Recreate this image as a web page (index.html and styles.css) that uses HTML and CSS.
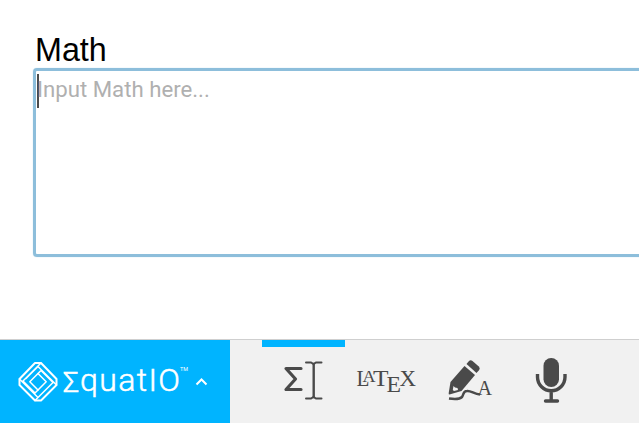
FILE: index.html
```html
<!DOCTYPE html>
<html lang="en">
<head>
<meta charset="utf-8">
<title>EquatIO</title>
<link rel="stylesheet" href="styles.css">
</head>
<body>
<main class="editor">
  <div class="label">Math</div>
  <div class="field"><span class="caret"></span><span class="placeholder">Input Math here...</span></div>
</main>
<footer class="toolbar">
  <div class="brand">
    <svg width="230" height="83" viewBox="0 340 230 83">
      <g fill="none" stroke="#fff" stroke-width="1.500" stroke-linejoin="round" stroke-linecap="round">
        <path d="M35 363H41L56.500 379V385L41 400.500H35L19.500 385V379Z" stroke-width="2"/>
        <path d="M38 373.500L46.200 381.700L38 390L29.800 381.700Z"/>
        <path d="M41 363L23 381L35 393L38 390M56.500 385L38 366.500L26 378.500M35 400.500L53 382.500L41 370.500L38 373.500M19.500 379L38 397.500L50 385.500"/>
      </g>
      <text class="brand-sigma" x="63" y="391.500" textLength="16" lengthAdjust="spacingAndGlyphs">Σ</text>
      <text class="brand-name" x="80" y="391" textLength="100" lengthAdjust="spacing">quatIO</text>
      <text class="brand-tm" x="180" y="371" textLength="8" lengthAdjust="spacingAndGlyphs">TM</text>
      <path d="M196.500 384.500L201.500 379.500L206.500 384.500" fill="none" stroke="#fff" stroke-width="2"/>
    </svg>
  </div>
  <nav class="tools">
    <div class="tool active">
      <svg width="83" height="83" viewBox="262 340 83 83">
        <g fill="none" stroke="#4a4a4a" stroke-linecap="round">
          <path d="M301 368.500H286L295.500 379L286 389.500H301" stroke-width="3.200" stroke-linejoin="round"/>
          <path d="M306 362.500H311L313.500 364L316 362.500H321.500M306 398.500H311L313.500 397L316 398.500H321.500" stroke-width="2"/>
          <path d="M313.700 364V397" stroke-width="2.400"/>
        </g>
      </svg>
    </div>
    <div class="tool">
      <svg width="83" height="83" viewBox="345 340 83 83">
        <g class="latex-text">
          <text x="356.500" y="386" textLength="13" lengthAdjust="spacingAndGlyphs">L</text>
          <text class="latex-a" x="362.500" y="382" textLength="13" lengthAdjust="spacingAndGlyphs">A</text>
          <text x="373" y="386" textLength="15.500" lengthAdjust="spacingAndGlyphs">T</text>
          <text x="386.500" y="391.500" textLength="14.500" lengthAdjust="spacingAndGlyphs">E</text>
          <text x="399.500" y="386" textLength="16.500" lengthAdjust="spacingAndGlyphs">X</text>
        </g>
      </svg>
    </div>
    <div class="tool">
      <svg width="83" height="83" viewBox="428 340 83 83">
        <g fill="#4a4a4a">
          <path d="M464.500 366L475 375L461.500 391L449.500 394.500Q448.500 394.500 448.700 393L450.500 382Z"/>
          <path d="M466.500 364L469 361Q470.500 359.500 472.500 361L478.800 366.500Q480.500 368 479.200 370L476.500 373Z"/>
          <path d="M453.500 386L455 387.500L457.500 388L458 390L454 391L452.800 390Z" fill="#f1f1f1"/>
        </g>
        <path d="M449 398.500C456 399.500 460 399 462 397C464 394 463 391 467 391C471 390.500 474 394 480 394.500" fill="none" stroke="#4a4a4a" stroke-width="2.500"/>
        <text class="ink-a" x="477.500" y="395" textLength="14.500" lengthAdjust="spacingAndGlyphs">A</text>
      </svg>
    </div>
    <div class="tool">
      <svg width="83" height="83" viewBox="511 340 83 83">
        <rect x="543.500" y="358" width="15.500" height="29" rx="7.700" fill="#4a4a4a"/>
        <path d="M537.500 374V377A13.700 13.700 0 0 0 565 377V374M551.200 391V400" fill="none" stroke="#4a4a4a" stroke-width="3.400"/>
        <path d="M545.500 401H557.500" stroke="#4a4a4a" stroke-width="3.400" stroke-linecap="round"/>
      </svg>
    </div>
  </nav>
</footer>
</body>
</html>
```
FILE: styles.css
```css
* { box-sizing: border-box; }
body {
  margin: 0;
  height: 423px;
  display: flex;
  flex-direction: column;
  overflow: hidden;
  background: #fff;
}
.editor { flex: 1; padding: 31px 0 0 33px; }
.label {
  height: 37px;
  padding-left: 2px;
  font: 32.3px/39px "Liberation Sans", Arial, sans-serif;
  color: #000;
}
.field {
  display: flex;
  height: 189px;
  width: 620px;
  padding-top: 3px;
  border: 3px solid #8dbedb;
  border-radius: 4px;
  box-shadow: 0 0 1px #9dcbe3;
}
.caret { width: 2px; height: 34px; margin-left: 1px; background: #4b4b4b; }
.placeholder {
  margin-left: -2px;
  font: 22.2px/31px Roboto, sans-serif;
  color: #b0b0b0;
  white-space: nowrap;
}
.toolbar {
  display: flex;
  height: 84px;
  border-top: 1px solid #cfcfcf;
  background: #f1f1f1;
}
.brand { width: 230px; background: #00b4ff; }
svg { display: block; }
.brand text { fill: #fff; font-family: Roboto, sans-serif; font-weight: 300; }
.brand .brand-sigma { font-size: 27px; stroke: #fff; stroke-width: 0.6px; }
.brand-name { font-size: 32px; stroke: #fff; stroke-width: 0.5px; }
.brand .brand-tm { font-size: 5.5px; font-weight: 400; }
.tools { display: flex; padding-left: 32px; }
.tool { width: 83px; }
.active { background: linear-gradient(#00b4ff 0 7px, transparent 7px); }
.latex-text, .ink-a { font-family: "Liberation Serif", serif; fill: #4a4a4a; }
.latex-text { font-size: 24px; }
.latex-a { font-size: 17px; }
.ink-a { font-size: 22px; }
```
